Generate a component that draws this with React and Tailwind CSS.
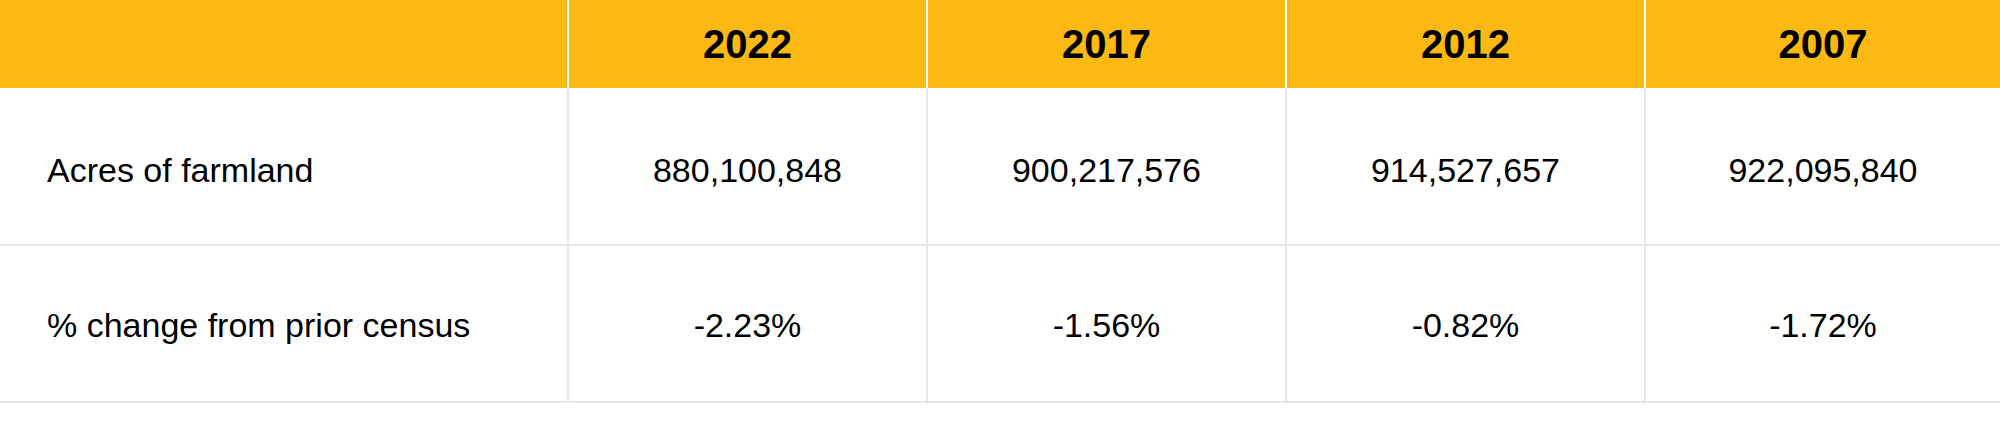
const years = ['2022', '2017', '2012', '2007'];

const rows = [
  { label: 'Acres of farmland', values: ['880,100,848', '900,217,576', '914,527,657', '922,095,840'], pad: 'pt-[8px]', height: 'h-[158px]' },
  { label: '% change from prior census', values: ['-2.23%', '-1.56%', '-0.82%', '-1.72%'], pad: 'pt-[3px]', height: 'h-[157px]' },
];

const cols = 'grid grid-cols-[567px_359px_359px_359px_1fr]';

export default function App() {
  return (
    <div className="w-[2000px] h-[423px] bg-white text-black font-['Liberation_Sans',Arial,sans-serif]">
      <div className={`${cols} h-[88px] bg-[#fdb913]`}>
        <div />
        {years.map(y => (
          <div key={y} className="flex items-center justify-center border-l-2 border-white text-[40px] font-bold">
            {y}
          </div>
        ))}
      </div>

      {rows.map(row => (
        <div key={row.label} className={`${cols} ${row.height} border-b-2 border-[#e6e6e6]`}>
          <div className={`flex items-center pl-[47px] text-[34px] ${row.pad}`}>{row.label}</div>
          {row.values.map((v, i) => (
            <div key={i} className={`flex items-center justify-center border-l-2 border-[#e6e6e6] text-[34px] ${row.pad}`}>
              {v}
            </div>
          ))}
        </div>
      ))}
    </div>
  );
}
